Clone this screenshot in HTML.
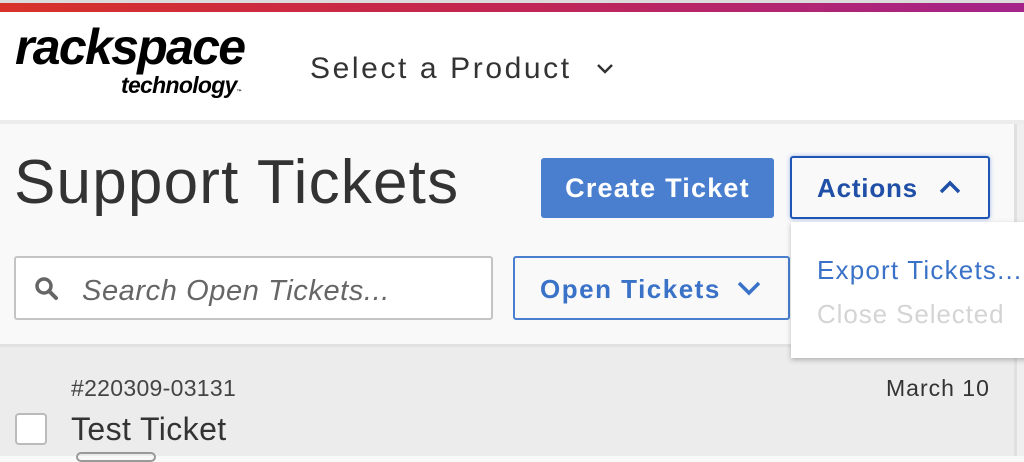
<!DOCTYPE html>
<html><head><style>
*{margin:0;padding:0;box-sizing:border-box}
body{width:1024px;height:456px;overflow:hidden;background:#f9f9f9;font-family:"Liberation Sans","DejaVu Sans",sans-serif;position:relative}
.abs{position:absolute;white-space:nowrap}
</style></head><body>
<div class="abs" style="left:0;top:0;width:1024px;height:3px;background:#dcdcdc"></div>
<div class="abs" style="left:0;top:3px;width:1024px;height:9px;background:linear-gradient(90deg,#d8322a,#c4264f 45%,#a4248a)"></div>
<div class="abs" style="left:0;top:12px;width:1024px;height:108px;background:#fff"></div>
<div class="abs" style="left:0;top:120px;width:1024px;height:4px;background:#ececec"></div>
<div class="abs" style="left:15px;top:22px;font-size:50px;font-weight:bold;font-style:italic;letter-spacing:-1.7px;color:#000;line-height:50px">rackspace</div>
<div class="abs" style="left:121px;top:72px;font-size:23px;font-weight:bold;font-style:italic;letter-spacing:-0.7px;color:#000;line-height:26px">technology<span style="font-size:5px">™</span></div>
<div class="abs" style="left:310px;top:52px;font-size:30px;color:#333;letter-spacing:2.6px;line-height:34px">Select a Product</div>
<svg class="abs" style="left:596px;top:62px" width="18" height="14"><path d="M2 3 L9 10 L16 3" stroke="#333" stroke-width="2.5" fill="none"/></svg>
<div class="abs" style="left:1014px;top:124px;width:3px;height:332px;background:#e0e0e0"></div>
<div class="abs" style="left:1017px;top:124px;width:7px;height:332px;background:#efefef"></div>
<div class="abs" style="left:14px;top:147px;font-size:62px;color:#333;line-height:72px;letter-spacing:1.2px">Support Tickets</div>
<div class="abs" style="left:541px;top:158px;width:233px;height:60px;background:#4a7fd0;border-radius:3px;color:#fff;font-size:27px;font-weight:bold;text-align:center;line-height:60px;letter-spacing:1.2px">Create Ticket</div>
<div class="abs" style="left:790px;top:156px;width:200px;height:63px;border:2px solid #1f56b4;border-radius:3px;box-shadow:0 0 4px rgba(70,120,220,.5);color:#1f4fa6;font-size:26px;font-weight:bold;line-height:61px;padding-left:25px;letter-spacing:0.8px">Actions</div>
<svg class="abs" style="left:938px;top:179px" width="24" height="16"><path d="M3 13 L12 4 L21 13" stroke="#1f4fa6" stroke-width="3.5" fill="none"/></svg>
<div class="abs" style="left:14px;top:256px;width:479px;height:64px;background:#fff;border:2px solid #c4c4c4;border-radius:3px"></div>
<svg class="abs" style="left:33px;top:274px" width="30" height="30"><circle cx="11" cy="12" r="7" stroke="#666" stroke-width="3.5" fill="none"/><path d="M16 17 L23 24" stroke="#666" stroke-width="4" stroke-linecap="round"/></svg>
<div class="abs" style="left:82px;top:273px;font-size:29px;font-style:italic;color:#666;line-height:36px;letter-spacing:0.6px">Search Open Tickets...</div>
<div class="abs" style="left:513px;top:256px;width:277px;height:64px;border:2px solid #4a7fd0;border-radius:3px;color:#3a72c8;font-size:26px;font-weight:bold;line-height:62px;padding-left:25px;letter-spacing:1.5px">Open Tickets</div>
<svg class="abs" style="left:736px;top:280px" width="26" height="16"><path d="M3 3 L13 13 L23 3" stroke="#3a72c8" stroke-width="3.5" fill="none"/></svg>
<div class="abs" style="left:0;top:344px;width:1014px;height:3px;background:#e2e2e2"></div>
<div class="abs" style="left:0;top:347px;width:1014px;height:109px;background:#ececec"></div>
<div class="abs" style="left:791px;top:222px;width:240px;height:136px;background:#fff;box-shadow:0 2px 5px rgba(0,0,0,.25)"></div>
<div class="abs" style="left:817px;top:254px;font-size:26px;color:#3a72c8;line-height:32px;letter-spacing:1.2px">Export Tickets...</div>
<div class="abs" style="left:817px;top:298px;font-size:26px;color:#d4d4d4;line-height:32px;letter-spacing:0.9px">Close Selected</div>
<div class="abs" style="left:71px;top:375px;font-size:23px;color:#444;line-height:26px;letter-spacing:0.3px">#220309-03131</div>
<div class="abs" style="left:886px;top:375px;font-size:23px;color:#333;line-height:26px;letter-spacing:1px">March 10</div>
<div class="abs" style="left:15px;top:413px;width:32px;height:32px;background:#fff;border:2px solid #bbb;border-radius:4px"></div>
<div class="abs" style="left:71px;top:410px;font-size:32px;color:#333;line-height:38px;letter-spacing:0.4px">Test Ticket</div>
<div class="abs" style="left:76px;top:452px;width:80px;height:10px;border:2px solid #999;border-radius:8px"></div>
</body></html>
